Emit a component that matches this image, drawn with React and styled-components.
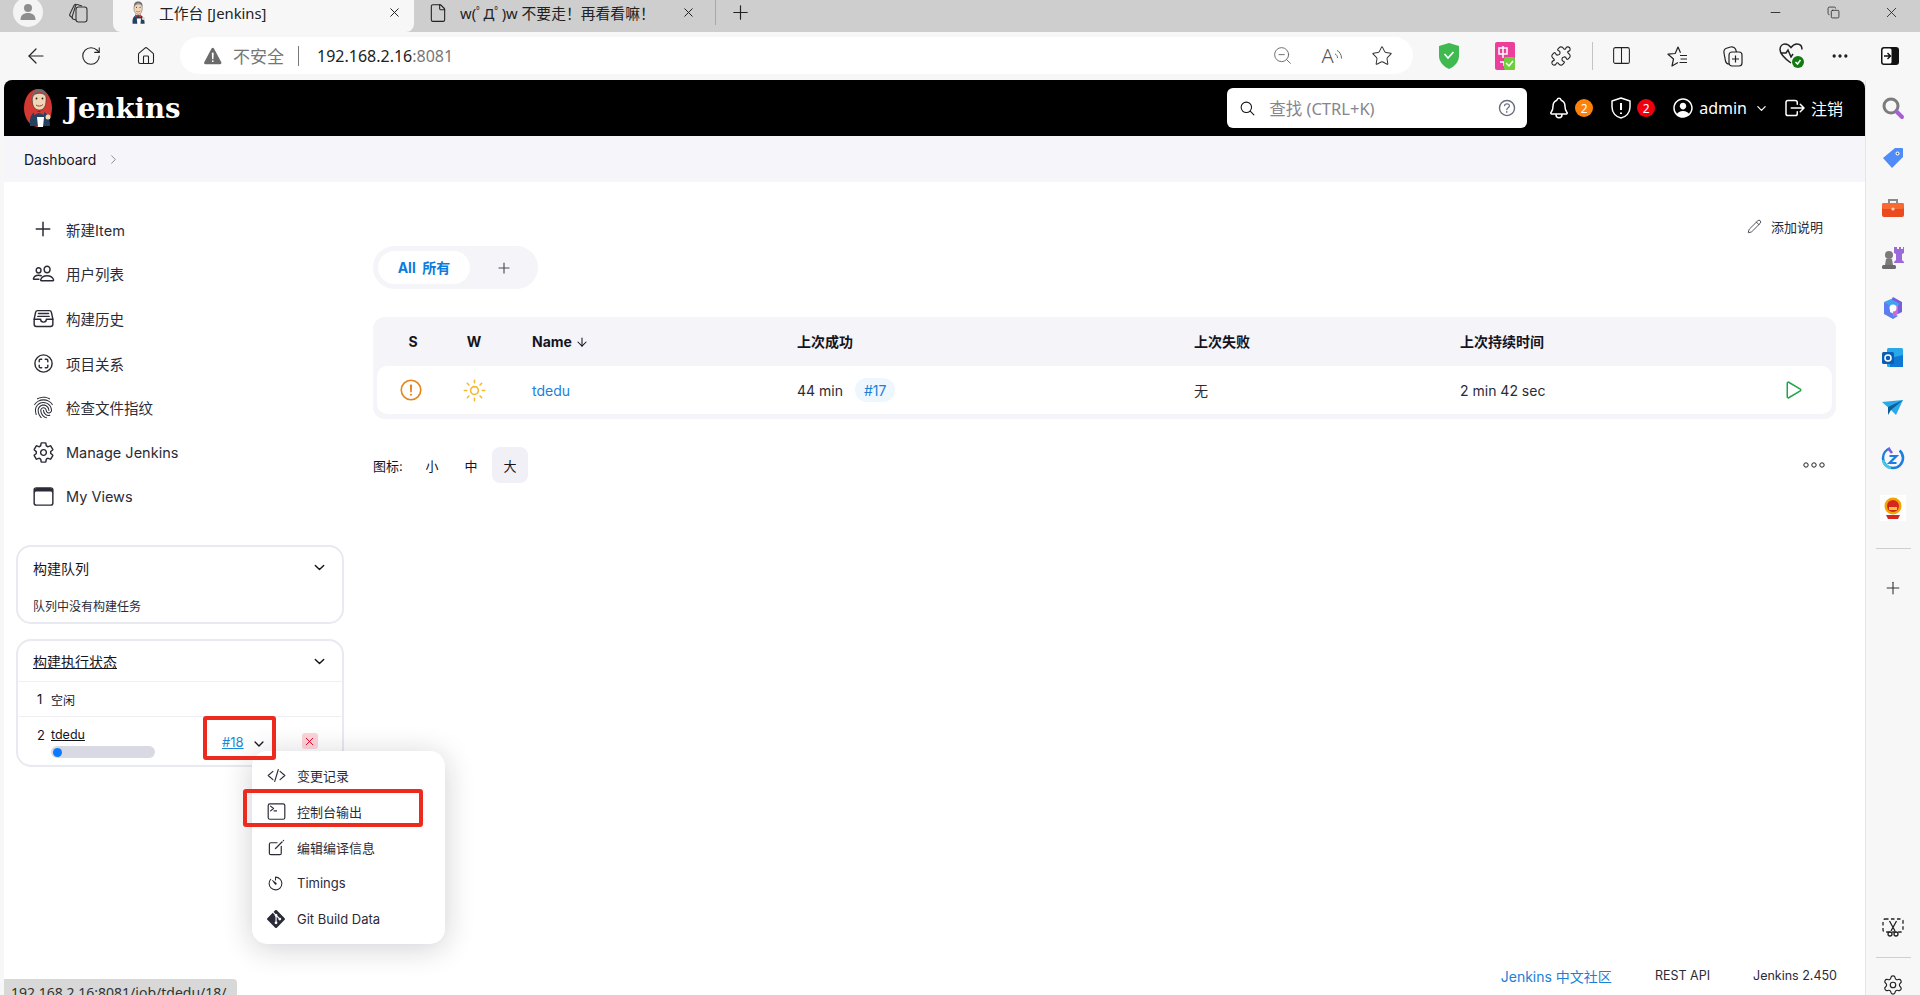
import React from "react";
import styled, { createGlobalStyle } from "styled-components";
import {
  ArrowLeft,
  RotateCw,
  House,
  ZoomOut,
  Star,
  Puzzle,
  Columns2,
  Plus,
  X,
  Minus,
  Copy,
  Ellipsis,
  File,
  ChevronRight,
  ArrowDown,
  Settings,
  Pencil,
} from "lucide-react";
import {
  IoAddOutline,
  IoPeopleOutline,
  IoFileTrayFullOutline,
  IoScanCircleOutline,
  IoFingerPrintOutline,
  IoSettingsOutline,
  IoBrowsersOutline,
  IoCodeSlashOutline,
  IoTerminalOutline,
  IoCreateOutline,
  IoTimerOutline,
  IoNotificationsOutline,
  IoPersonCircleOutline,
  IoLogOutOutline,
  IoSearchOutline,
  IoHelpCircleOutline,
  IoChevronDownOutline,
  IoSunnyOutline,
  IoAlertCircleOutline,
  IoPlayOutline,
  IoCloseOutline,
  IoWarning,
} from "react-icons/io5";
import { SiGit } from "react-icons/si";

const GlobalStyle = createGlobalStyle`
  html, body { margin: 0; padding: 0; height: 100%; overflow: hidden; background: #f7f7f7; }
  * { box-sizing: border-box; }
  body {
    font-family: Inter, "Noto Sans CJK SC", sans-serif;
    color: #14141f;
  }
`;

const Butler = ({ size = 40, bg = true }) => (
  <svg width={(size * 30) / 40} height={size} viewBox="0 0 30 40">
    {bg && <ellipse cx="14" cy="20" rx="14" ry="19" fill="#d33833" />}
    <path d="M6 38c-1-9 2-15 9-15s11 5 11 15z" fill="#24415f" />
    <path d="M8.500 9c-1 7 1 13 7 13 5 0 7-5 6.500-13-1-5-12-5-13.500 0z" fill="#f0d6b7" stroke="#2a2a2a" strokeWidth=".6" />
    <path d="M8.500 10C7.500 4 11 1 15.500 1S23 4 22.500 9c-1.500-3-4-5-7-5s-5.500 2-7 6z" fill="#6d6b6d" />
    <path d="M12 17c2 1.500 5 1.500 7-.5" stroke="#8a4a2a" strokeWidth="1" fill="none" />
    <circle cx="12.500" cy="10.500" r=".9" fill="#222" />
    <circle cx="18.500" cy="10.500" r=".9" fill="#222" />
    <path d="M10 22l5 2 5-2v5l-5-2-5 2z" fill="#d33833" />
    <path d="M13 29h7l-1 10h-5z" fill="#fff" />
    <circle cx="24" cy="29" r="2.500" fill="#f0d6b7" />
  </svg>
);

const WorkspacesIcon = () => (
  <svg width="24" height="24" viewBox="0 0 24 24" fill="none" stroke="#333" strokeWidth="1.100">
    <rect x="10" y="6" width="11" height="15" rx="2.500" />
    <path d="M10 19l-2.500-.8a2 2 0 0 1-1.300-2.500L9.500 5A2 2 0 0 1 12 3.700l4 1.300" />
    <path d="M6.500 16.500l-1.800-1a2 2 0 0 1-.7-2.700L8 4.500A2 2 0 0 1 10.500 3.500" />
  </svg>
);

const ShieldAlertIcon = ({ size = 24 }) => (
  <svg width={size} height={size} viewBox="0 0 24 24" fill="none" stroke="#fff" strokeWidth="1.500">
    <path d="M12 2l9 3v6c0 6-4 10-9 11-5-1-9-5-9-11V5z" strokeLinejoin="round" />
    <path d="M12 7v7M12 16.500v1.500" strokeWidth="2" />
  </svg>
);

const GreenShield = () => (
  <svg width="22" height="28" viewBox="0 0 22 28">
    <path d="M11 1l10 3v10c0 6-5 11-10 13C6 25 1 20 1 14V4z" fill="#3fb950" />
    <path d="M6.500 12l3.500 4 5.500-6" stroke="#fff" strokeWidth="1.600" fill="none" />
  </svg>
);

const TranslatorIcon = () => (
  <svg width="22" height="28" viewBox="0 0 22 28">
    <rect x="1" y="0" width="20" height="28" rx="2" fill="#ec3f9b" />
    <path d="M5 6h8v6H5zM9 4v12M6 20h4v4" stroke="#fff" strokeWidth="1.500" fill="none" />
    <rect x="10" y="15" width="11" height="13" rx="2" fill="#6fce3c" />
    <path d="M12 21l3 3 4-5" stroke="#fff" strokeWidth="1.500" fill="none" />
  </svg>
);

const SoundArcs = () => (
  <svg width="9" height="14" viewBox="0 0 9 14" fill="none" stroke="#666" strokeWidth="1">
    <path d="M1 5c1.500 .5 2.500 2 2.500 4M3 1.500c2.500 1 4.500 4 4.500 8" />
  </svg>
);

const FavoritesIcon = () => (
  <svg width="24" height="24" viewBox="0 0 24 24" fill="none" stroke="#222" strokeWidth="1.200" strokeLinejoin="round">
    <path d="M13 18.500l-6 3.500 1.500-7L3 10.200l7.200-.7L13 3l2.500 5.800" />
    <path d="M15 11.500h7M15.500 15h6.500M14.500 18.500h7.500" />
  </svg>
);

const CollectionsIcon = () => (
  <svg width="24" height="24" viewBox="0 0 24 24" fill="none" stroke="#222" strokeWidth="1.200">
    <rect x="8" y="8" width="13" height="14" rx="3" />
    <path d="M14.500 11.500v7M11 15h7" />
    <path d="M8 20c-2 0-3-1-3.500-3L3 9c-.4-2.500 .5-4 2.500-4.700l4-1.300c2-.5 4 0 5 2l1 3" />
  </svg>
);

const HeartBadge = () => (
  <svg width="28" height="30" viewBox="0 0 28 30" fill="none">
    <path
      d="M13 22C6 17 2 13 2 8.500 2 5 4.500 3 7 3c2.500 0 4.500 1.500 6 3.500C14.500 4.500 16.500 3 19 3c3 0 5 2 5 5.500"
      stroke="#222"
      strokeWidth="1.500"
    />
    <path d="M3 12h5l2-3 3 7 2-3" stroke="#222" strokeWidth="1.500" />
    <circle cx="20" cy="21" r="6" fill="#107c10" />
    <path d="M17.500 21l2 2 3-4" stroke="#fff" strokeWidth="1.500" />
  </svg>
);

const SidebarToggle = () => (
  <svg width="20" height="20" viewBox="0 0 20 20">
    <rect x="1" y="1" width="18" height="18" rx="3" fill="#111" />
    <rect x="2.500" y="2.500" width="9" height="15" rx="1.500" fill="#fff" />
    <path d="M4 10h6M7.500 7l3 3-3 3" stroke="#111" strokeWidth="1.400" fill="none" />
  </svg>
);

const DotsOutline = () => (
  <svg width="24" height="8" viewBox="0 0 24 8" fill="none" stroke="#222" strokeWidth="1">
    <circle cx="4" cy="4" r="2.200" />
    <circle cx="12" cy="4" r="2.200" />
    <circle cx="20" cy="4" r="2.200" />
  </svg>
);

const RailSearch = () => (
  <svg width="24" height="24" viewBox="0 0 24 24" fill="none">
    <circle cx="10" cy="10" r="7" stroke="#7c7c7c" strokeWidth="3" />
    <path d="M15.500 15.500L21 21" stroke="#a45fd6" strokeWidth="4" strokeLinecap="round" />
  </svg>
);

const RailTag = () => (
  <svg width="22" height="22" viewBox="0 0 22 22">
    <path d="M13 1h7a1 1 0 0 1 1 1v8L10 21 1 11z" fill="#4f8bf9" />
    <circle cx="15.500" cy="6.500" r="2" fill="#fff" />
    <circle cx="15.500" cy="6.500" r="1" fill="#2a5fd0" />
  </svg>
);

const RailToolbox = () => (
  <svg width="24" height="20" viewBox="0 0 24 20">
    <path d="M8 5V2h8v3" stroke="#8a8a8a" strokeWidth="2" fill="none" />
    <rect x="1" y="5" width="22" height="14" rx="2" fill="#ea4a1f" />
    <rect x="1" y="5" width="22" height="6" rx="2" fill="#f96a32" />
    <circle cx="12" cy="11" r="1.600" fill="#ffd3c0" />
  </svg>
);

const RailChess = () => (
  <svg width="24" height="24" viewBox="0 0 24 24">
    <circle cx="8" cy="9" r="4" fill="#7b7b7b" />
    <path d="M5 13h6l1 6H4z" fill="#7b7b7b" />
    <rect x="1" y="19" width="14" height="4" rx="1.500" fill="#6a6a6a" />
    <path d="M14 1h2v2h2V1h2v2h2V1h1v6l-2 1v6l2 2v1H13v-1l2-2V8l-2-1V1z" fill="#9b6ad8" />
  </svg>
);

const RailCopilot = () => (
  <svg width="22" height="24" viewBox="0 0 22 24">
    <path d="M11 1l9 5v10l-4 2V8L9 4z" fill="#7a5ce0" />
    <path d="M2 6l7-3 9 5-7 4-5-2z" fill="#3fa3ee" />
    <path d="M2 6v12l9 5 5-3-8-4V10z" fill="#5c7df0" />
    <path d="M11 12l5-3v9l-5 3z" fill="#c66bd8" />
    <circle cx="11" cy="12" r="3.500" fill="#fff" />
  </svg>
);

const RailOutlook = () => (
  <svg width="22" height="20" viewBox="0 0 22 20">
    <rect x="5" y="0" width="16" height="19" rx="1.500" fill="#28a8ea" />
    <path d="M8 10l13-3v12H8z" fill="#0f78d4" />
    <rect x="0" y="4" width="12" height="12" rx="1.500" fill="#0a5fb4" />
    <circle cx="6" cy="10" r="3" fill="none" stroke="#fff" strokeWidth="1.500" />
  </svg>
);

const RailSend = () => (
  <svg width="22" height="16" viewBox="0 0 22 16">
    <path d="M0 2l21-2-7 15-5-5z" fill="#29a9eb" />
    <path d="M6 7l15-7-12 10-3 5z" fill="#0b5f99" />
  </svg>
);

const RailZ = () => (
  <svg width="24" height="24" viewBox="0 0 24 24" fill="none">
    <circle cx="12" cy="12" r="10" stroke="#1a7fe0" strokeWidth="2.500" strokeDasharray="44 10" />
    <path d="M2 14a10 10 0 0 0 8 8" stroke="#45c8e8" strokeWidth="2.500" />
    <path d="M7 2l4 5" stroke="#7a5ce0" strokeWidth="2.500" />
    <path d="M8.500 10h7l-7 7h7" stroke="#1a7fe0" strokeWidth="2.200" />
  </svg>
);

const RailEmblem = () => (
  <svg width="26" height="26" viewBox="0 0 26 26">
    <rect width="26" height="26" fill="#fff" />
    <circle cx="13" cy="11" r="8.500" fill="#f0a500" />
    <circle cx="13" cy="11" r="6" fill="#d7261e" />
    <path d="M6 20h14l-2 4H8z" fill="#d7261e" />
    <rect x="9" y="12" width="8" height="3" fill="#f5c542" />
  </svg>
);

const RailCut = () => (
  <svg width="22" height="20" viewBox="0 0 22 20" fill="none" stroke="#222" strokeWidth="1.300">
    <rect x="1" y="1" width="20" height="13" rx="2" strokeDasharray="3.500 2.500" />
    <path d="M7.500 3l5.500 10M14.500 3L9 13" />
    <circle cx="8" cy="16" r="2" />
    <circle cx="14" cy="16" r="2" />
  </svg>
);

const App = () => {
  const navItems = [
    { Icon: IoAddOutline, label: "新建Item" },
    { Icon: IoPeopleOutline, label: "用户列表" },
    { Icon: IoFileTrayFullOutline, label: "构建历史" },
    { Icon: IoScanCircleOutline, label: "项目关系" },
    { Icon: IoFingerPrintOutline, label: "检查文件指纹" },
    { Icon: IoSettingsOutline, label: "Manage Jenkins" },
    { Icon: IoBrowsersOutline, label: "My Views" },
  ];
  const menuItems = [
    { Icon: IoCodeSlashOutline, label: "变更记录", size: 19 },
    { Icon: IoTerminalOutline, label: "控制台输出", size: 19 },
    { Icon: IoCreateOutline, label: "编辑编译信息", size: 19 },
    { Icon: IoTimerOutline, label: "Timings", size: 17 },
    { Icon: SiGit, label: "Git Build Data", size: 18 },
  ];
  const railIcons = [RailSearch, RailTag, RailToolbox, RailChess, RailCopilot, RailOutlook, RailSend, RailZ, RailEmblem];

  return (
    <Screen>
      <GlobalStyle />
      <TabStrip>
        <ProfileDot>
          <svg width="20" height="20" viewBox="0 0 20 20" fill="#8e8e8e">
            <circle cx="10" cy="6" r="4" />
            <path d="M2.500 18c0-5 3-7 7.500-7s7.500 2 7.500 7z" />
          </svg>
        </ProfileDot>
        <WorkspaceSlot>
          <WorkspacesIcon />
        </WorkspaceSlot>
        <ActiveTab>
          <Butler size={24} bg={false} />
          <TabTitle>工作台 [Jenkins]</TabTitle>
          <X size={15} strokeWidth={1.6} color="#222" />
        </ActiveTab>
        <IdleTab>
          <File size={20} strokeWidth={1.3} color="#222" />
          <TabTitle>w(ﾟДﾟ)w 不要走！再看看嘛！</TabTitle>
          <X size={15} strokeWidth={1.6} color="#222" />
        </IdleTab>
        <NewTab>
          <Plus size={23} strokeWidth={1.2} color="#222" />
        </NewTab>
        <WindowControls>
          <WindowButton>
            <Minus size={15} strokeWidth={1.4} color="#222" />
          </WindowButton>
          <WindowButton>
            <Copy size={13} strokeWidth={1.4} color="#222" />
          </WindowButton>
          <WindowButton>
            <X size={17} strokeWidth={1.2} color="#222" />
          </WindowButton>
        </WindowControls>
      </TabStrip>

      <Toolbar>
        <ToolSlot $w={55}>
          <ArrowLeft size={24} strokeWidth={1.2} color="#222" />
        </ToolSlot>
        <ToolSlot $w={55}>
          <RotateCw size={22} strokeWidth={1.2} color="#222" />
        </ToolSlot>
        <ToolSlot $w={55}>
          <House size={20} strokeWidth={1.3} color="#222" />
        </ToolSlot>
        <AddressBar>
          <IoWarning size={22} color="#6b6b6b" />
          <InsecureLabel>不安全</InsecureLabel>
          <AddressDivider />
          <Url>
            192.168.2.16<UrlPort>:8081</UrlPort>
          </Url>
          <AddressActions>
            <ToolSlot $w={50}>
              <ZoomOut size={21} strokeWidth={1.1} color="#6a6a6a" />
            </ToolSlot>
            <ToolSlot $w={50}>
              <ReadAloud>A</ReadAloud>
              <SoundArcs />
            </ToolSlot>
            <ToolSlot $w={50}>
              <Star size={22} strokeWidth={1.1} color="#333" />
            </ToolSlot>
          </AddressActions>
        </AddressBar>
        <ToolGroup>
          <ToolSlot $w={56}>
            <GreenShield />
          </ToolSlot>
          <ToolSlot $w={56}>
            <TranslatorIcon />
          </ToolSlot>
          <ToolSlot $w={56}>
            <Puzzle size={22} strokeWidth={1.2} color="#222" />
          </ToolSlot>
          <ToolDivider />
          <ToolSlot $w={56}>
            <Columns2 size={21} strokeWidth={1.2} color="#222" />
          </ToolSlot>
          <ToolSlot $w={56}>
            <FavoritesIcon />
          </ToolSlot>
          <ToolSlot $w={56}>
            <CollectionsIcon />
          </ToolSlot>
          <ToolSlot $w={62}>
            <HeartBadge />
          </ToolSlot>
          <ToolSlot $w={34}>
            <Ellipsis size={20} color="#222" />
          </ToolSlot>
          <ToolSlot $w={66}>
            <SidebarToggle />
          </ToolSlot>
        </ToolGroup>
      </Toolbar>

      <Body>
        <Gutter />
        <Page>
          <Header>
            <Butler size={40} />
            <Brand>Jenkins</Brand>
            <SearchBox>
              <IoSearchOutline size={17} color="#14141f" />
              <SearchHint>查找 (CTRL+K)</SearchHint>
              <IoHelpCircleOutline size={22} color="#6b6b80" />
            </SearchBox>
            <HeaderAction $ml={20}>
              <IoNotificationsOutline size={24} />
              <CountBadge $bg="#fe820a">2</CountBadge>
            </HeaderAction>
            <HeaderAction $ml={16}>
              <ShieldAlertIcon />
              <CountBadge $bg="#f0000f">2</CountBadge>
            </HeaderAction>
            <HeaderAction $ml={16}>
              <IoPersonCircleOutline size={24} />
              <HeaderLabel>admin</HeaderLabel>
              <HeaderChevron>
                <IoChevronDownOutline size={13} />
              </HeaderChevron>
            </HeaderAction>
            <HeaderAction $ml={15}>
              <IoLogOutOutline size={24} />
              <HeaderLabel>注销</HeaderLabel>
            </HeaderAction>
          </Header>

          <Breadcrumb>
            Dashboard
            <ChevronRight size={15} strokeWidth={1.3} color="#777" />
          </Breadcrumb>

          <Main>
            <SidePanel>
              <Nav>
                {navItems.map(({ Icon, label }) => (
                  <NavItem key={label}>
                    <NavIcon>
                      <Icon size={label === "新建Item" ? 24 : 23} />
                    </NavIcon>
                    {label}
                  </NavItem>
                ))}
              </Nav>
              <Card>
                <CardHead>
                  构建队列
                  <IoChevronDownOutline size={15} />
                </CardHead>
                <QueueNote>队列中没有构建任务</QueueNote>
              </Card>
              <Card>
                <CardHead $ruled>
                  <u>构建执行状态</u>
                  <IoChevronDownOutline size={15} />
                </CardHead>
                <ExecutorRow $h={35}>
                  <ExecutorNo>1</ExecutorNo>
                  <span>空闲</span>
                </ExecutorRow>
                <ExecutorRow $h={48} $last>
                  <ExecutorNo>2</ExecutorNo>
                  <ExecutorJob>
                    <u>tdedu</u>
                    <Progress>
                      <ProgressDot />
                    </Progress>
                  </ExecutorJob>
                  <BuildLink>#18</BuildLink>
                  <BuildChevron>
                    <IoChevronDownOutline size={14} />
                  </BuildChevron>
                  <StopButton>
                    <IoCloseOutline size={15} color="#e6001f" />
                  </StopButton>
                </ExecutorRow>
              </Card>
            </SidePanel>

            <Content>
              <DescriptionRow>
                <Pencil size={15} strokeWidth={1.3} />
                添加说明
              </DescriptionRow>
              <ViewTabs>
                <ViewTab>All&nbsp; 所有</ViewTab>
                <AddView>
                  <IoAddOutline size={18} color="#4a4a5a" />
                </AddView>
              </ViewTabs>
              <JobTable>
                <TableHead>
                  <HeadCell $center>S</HeadCell>
                  <HeadCell $center>W</HeadCell>
                  <HeadCell $pl={33}>
                    Name <ArrowDown size={14} strokeWidth={1.8} style={{ verticalAlign: -2 }} />
                  </HeadCell>
                  <HeadCell>上次成功</HeadCell>
                  <HeadCell>上次失败</HeadCell>
                  <HeadCell>上次持续时间</HeadCell>
                  <HeadCell />
                </TableHead>
                <TableRow>
                  <BodyCell $center $pr={5}>
                    <IoAlertCircleOutline size={26} color="#e8841c" />
                  </BodyCell>
                  <BodyCell $center>
                    <IoSunnyOutline size={25} color="#f2b92c" />
                  </BodyCell>
                  <BodyCell $pl={33}>
                    <JobLink>tdedu</JobLink>
                  </BodyCell>
                  <BodyCell>
                    44 min
                    <BuildPill>#17</BuildPill>
                  </BodyCell>
                  <BodyCell>无</BodyCell>
                  <BodyCell>2 min 42 sec</BodyCell>
                  <BodyCell $center>
                    <IoPlayOutline size={24} color="#1ea64b" />
                  </BodyCell>
                </TableRow>
              </JobTable>
              <LegendRow>
                <LegendLabel>图标:</LegendLabel>
                <SizeOption>小</SizeOption>
                <SizeOption>中</SizeOption>
                <SizeOption $active>大</SizeOption>
                <LegendMore>
                  <DotsOutline />
                </LegendMore>
              </LegendRow>
            </Content>
          </Main>

          <Footer>
            <FooterLink>Jenkins 中文社区</FooterLink>
            <span>REST API</span>
            <span>Jenkins 2.450</span>
          </Footer>
        </Page>

        <Rail>
          {railIcons.map((Icon, i) => (
            <RailSlot key={i} $h={50}>
              <Icon />
            </RailSlot>
          ))}
          <RailDivider $mt={15} />
          <RailSlot $h={48} $mt={15}>
            <Plus size={20} strokeWidth={1.3} color="#333" />
          </RailSlot>
          <RailSpacer />
          <RailSlot $h={48}>
            <RailCut />
          </RailSlot>
          <RailDivider $mt={5} />
          <RailSlot $h={33} $pt={13} $mt={4}>
            <Settings size={22} strokeWidth={1.3} color="#222" />
          </RailSlot>
        </Rail>
      </Body>

      <Menu>
        {menuItems.map(({ Icon, label, size }) => (
          <MenuItem key={label}>
            <MenuIcon>
              <Icon size={size} />
            </MenuIcon>
            {label}
          </MenuItem>
        ))}
      </Menu>
      <Highlight $x={203} $y={716} $w={73} $h={44} />
      <Highlight $x={243} $y={789} $w={180} $h={38} />
      <StatusBubble>192.168.2.16:8081/job/tdedu/18/</StatusBubble>
    </Screen>
  );
};

export default App;

const Screen = styled.div`
  position: relative;
  width: 1920px;
  height: 995px;
  display: flex;
  flex-direction: column;
  overflow: hidden;
  background: #f7f7f7;
`;
const TabStrip = styled.div`
  height: 32px;
  flex: none;
  display: flex;
  align-items: flex-start;
  background: #cecece;
  padding-left: 13px;
  font-family: "Noto Sans", "Noto Sans CJK SC", sans-serif;
`;
const ProfileDot = styled.div`
  width: 30px;
  height: 30px;
  border-radius: 50%;
  background: #f4f4f4;
  display: flex;
  align-items: center;
  justify-content: center;
  margin-top: -3px;
  flex: none;
`;
const WorkspaceSlot = styled.div`
  width: 70px;
  height: 25px;
  flex: none;
  display: flex;
  align-items: center;
  justify-content: center;
`;
const ActiveTab = styled.div`
  width: 301px;
  height: 32px;
  flex: none;
  display: flex;
  align-items: center;
  padding: 0 12px 7px 16px;
  background: #f7f7f7;
  border-radius: 0 0 8px 8px;
`;
const IdleTab = styled.div`
  width: 302px;
  height: 25px;
  flex: none;
  display: flex;
  align-items: center;
  padding: 0 19px 0 14px;
  border-right: 1px solid #a8a8a8;
`;
const TabTitle = styled.span`
  flex: 1;
  margin-left: 12px;
  font-size: 14.800px;
  color: #222;
  white-space: nowrap;
`;
const NewTab = styled.div`
  width: 48px;
  height: 25px;
  flex: none;
  display: flex;
  align-items: center;
  justify-content: center;
`;
const WindowControls = styled.div`
  margin-left: auto;
  width: 173px;
  height: 25px;
  display: flex;
`;
const WindowButton = styled.div`
  flex: 1;
  display: flex;
  align-items: center;
  justify-content: center;
`;
const Toolbar = styled.div`
  height: 48px;
  flex: none;
  display: flex;
  align-items: center;
  padding: 0 0 1px 8px;
  background: #f7f7f7;
  overflow: hidden;
`;
const ToolSlot = styled.div`
  width: ${(p) => p.$w}px;
  display: flex;
  align-items: center;
  justify-content: center;
  flex: none;
`;
const AddressBar = styled.div`
  width: 1233px;
  height: 37px;
  flex: none;
  margin-left: 7px;
  padding-left: 22px;
  display: flex;
  align-items: center;
  background: #fff;
  border-radius: 19px;
  font-family: "Noto Sans", "Noto Sans CJK SC", sans-serif;
`;
const InsecureLabel = styled.span`
  margin-left: 9px;
  font-size: 17px;
  color: #757575;
`;
const AddressDivider = styled.span`
  width: 1px;
  height: 20px;
  margin: 0 18px 0 14px;
  background: #777;
`;
const Url = styled.span`
  font-size: 16px;
  color: #222;
`;
const UrlPort = styled.span`
  color: #777;
`;
const AddressActions = styled.div`
  margin-left: auto;
  padding-right: 6px;
  display: flex;
`;
const ReadAloud = styled.span`
  font-size: 20px;
  font-weight: 300;
  color: #555;
`;
const ToolGroup = styled.div`
  display: flex;
  align-items: center;
  flex: none;
  margin-left: 8px;
`;
const ToolDivider = styled.div`
  width: 1px;
  height: 28px;
  flex: none;
  margin-left: 3px;
  background: #c4c4c4;
`;
const Body = styled.div`
  flex: 1;
  min-height: 0;
  display: flex;
`;
const Gutter = styled.div`
  width: 4px;
  flex: none;
`;
const Page = styled.div`
  width: 1861px;
  flex: none;
  display: flex;
  flex-direction: column;
  background: #fff;
  border-radius: 8px 8px 0 0;
  overflow: hidden;
`;
const Header = styled.header`
  height: 56px;
  flex: none;
  display: flex;
  align-items: center;
  padding: 0 22px 0 20px;
  background: #000;
  color: #fff;
`;
const Brand = styled.div`
  margin-left: 11px;
  font-family: "DejaVu Serif", serif;
  font-weight: 700;
  font-size: 27.500px;
`;
const SearchBox = styled.div`
  width: 300px;
  height: 40px;
  flex: none;
  margin-left: auto;
  padding: 0 9px 0 12px;
  display: flex;
  align-items: center;
  background: #fff;
  border-radius: 6px;
  font-family: "Noto Sans", "Noto Sans CJK SC", sans-serif;
`;
const SearchHint = styled.span`
  flex: 1;
  margin-left: 13px;
  font-size: 16.500px;
  color: #85858f;
`;
const HeaderAction = styled.div`
  display: flex;
  align-items: center;
  flex: none;
  margin-left: ${(p) => p.$ml}px;
  font-family: "Noto Sans", "Noto Sans CJK SC", sans-serif;
`;
const CountBadge = styled.span`
  width: 18px;
  height: 18px;
  margin-left: 4px;
  display: flex;
  align-items: center;
  justify-content: center;
  border-radius: 50%;
  background: ${(p) => p.$bg};
  font-size: 12px;
  color: #fff;
`;
const HeaderLabel = styled.span`
  margin-left: 4px;
  font-size: 16px;
`;
const HeaderChevron = styled.span`
  margin-left: 8px;
  display: flex;
`;
const Breadcrumb = styled.div`
  height: 46px;
  flex: none;
  display: flex;
  align-items: center;
  gap: 10px;
  padding-left: 20px;
  background: #f5f5fa;
  font-size: 14px;
`;
const Main = styled.div`
  flex: 1;
  min-height: 0;
  display: flex;
  padding: 0 29px 0 12px;
`;
const SidePanel = styled.aside`
  width: 328px;
  flex: none;
  padding-top: 25px;
`;
const Nav = styled.nav`
  margin-bottom: 26px;
`;
const NavItem = styled.div`
  height: 44.6px;
  display: flex;
  align-items: center;
  padding-left: 15px;
  font-size: 14.500px;
  color: #2b2b38;
`;
const NavIcon = styled.span`
  width: 35px;
  display: flex;
  justify-content: center;
  padding-right: 11px;
`;
const Card = styled.section`
  margin-bottom: 15px;
  border: 2px solid #e9e9f0;
  border-radius: 15px;
  font-size: 12px;
`;
const CardHead = styled.div`
  height: 41px;
  display: flex;
  align-items: center;
  justify-content: space-between;
  padding: 0 15px;
  font-size: 14px;
  ${(p) => p.$ruled && "border-bottom: 1px solid #efeff3;"}
`;
const QueueNote = styled.div`
  padding: 9px 15px 0;
  height: 34px;
  color: #2b2b38;
`;
const ExecutorRow = styled.div`
  height: ${(p) => p.$h}px;
  display: flex;
  align-items: ${(p) => (p.$last ? "flex-start" : "center")};
  padding: ${(p) => (p.$last ? "10px 0 0 19px" : "0 0 0 19px")};
  ${(p) => !p.$last && "border-bottom: 1px solid #efeff3;"}
`;
const ExecutorNo = styled.span`
  width: 14px;
  font-size: 13px;
`;
const ExecutorJob = styled.div`
  width: 171px;
  font-size: 12.500px;
  line-height: 16px;
`;
const Progress = styled.div`
  width: 104px;
  height: 12px;
  margin-top: 3px;
  padding: 1.500px 2px;
  border-radius: 6px;
  background: #d9d9e3;
`;
const ProgressDot = styled.div`
  width: 9px;
  height: 9px;
  border-radius: 50%;
  background: #0b7cff;
`;
const BuildLink = styled.u`
  margin-top: 7px;
  font-size: 13px;
  line-height: 16px;
  color: #1a8ad8;
`;
const BuildChevron = styled.span`
  margin: 10px 0 0 8px;
  line-height: 0;
`;
const StopButton = styled.span`
  width: 16px;
  height: 16px;
  margin: 6px 0 0 36px;
  display: flex;
  align-items: center;
  justify-content: center;
  border-radius: 3px;
  background: #fcd5da;
`;
const Content = styled.main`
  flex: 1;
  min-width: 0;
  margin-left: 29px;
  padding-top: 34px;
`;
const DescriptionRow = styled.div`
  height: 22px;
  margin-bottom: 8px;
  padding: 0 13px 2px 0;
  display: flex;
  align-items: center;
  justify-content: flex-end;
  gap: 9px;
  font-size: 13px;
  color: #2b2b38;
`;
const ViewTabs = styled.div`
  width: 165px;
  height: 43px;
  padding: 5px;
  display: flex;
  align-items: center;
  border-radius: 22px;
  background: #f4f4f9;
`;
const ViewTab = styled.div`
  width: 92px;
  height: 33px;
  flex: none;
  padding-bottom: 1px;
  display: flex;
  align-items: center;
  justify-content: center;
  border-radius: 17px;
  background: #fff;
  font-size: 14px;
  font-weight: 700;
  color: #0b7cdf;
`;
const AddView = styled.div`
  width: 68px;
  flex: none;
  display: flex;
  justify-content: center;
`;
const JobTable = styled.div`
  height: 102px;
  margin-top: 28px;
  padding: 0 4px 5px;
  border-radius: 12px;
  background: #f4f4f9;
`;
const tableColumns = "72px 50px 298px 397px 266px 1fr 76px";
const TableHead = styled.div`
  height: 49px;
  padding-bottom: 1px;
  display: grid;
  grid-template-columns: ${tableColumns};
  align-items: center;
  font-size: 14px;
  font-weight: 700;
`;
const HeadCell = styled.div`
  text-align: ${(p) => (p.$center ? "center" : "left")};
  padding-left: ${(p) => p.$pl || 0}px;
`;
const TableRow = styled.div`
  height: 48px;
  display: grid;
  grid-template-columns: ${tableColumns};
  align-items: center;
  border-radius: 10px;
  background: #fff;
  font-size: 14px;
  color: #2b2b38;
`;
const BodyCell = styled.div`
  display: flex;
  align-items: center;
  justify-content: ${(p) => (p.$center ? "center" : "flex-start")};
  padding-left: ${(p) => p.$pl || 0}px;
  padding-right: ${(p) => p.$pr || 0}px;
`;
const JobLink = styled.span`
  color: #1a80d8;
`;
const BuildPill = styled.span`
  height: 24px;
  margin-left: 12px;
  padding: 0 9px;
  display: flex;
  align-items: center;
  border-radius: 12px;
  background: #eef7fe;
  color: #1a80d8;
`;
const LegendRow = styled.div`
  height: 36px;
  margin-top: 28px;
  display: flex;
  align-items: center;
  gap: 3px;
  font-size: 13px;
`;
const LegendLabel = styled.span`
  width: 38px;
`;
const SizeOption = styled.span`
  width: 36px;
  height: 36px;
  display: flex;
  align-items: center;
  justify-content: center;
  border-radius: 8px;
  background: ${(p) => (p.$active ? "#f0f0f6" : "transparent")};
`;
const LegendMore = styled.span`
  margin-left: auto;
  padding-right: 10px;
  display: flex;
`;
const Footer = styled.footer`
  height: 39px;
  flex: none;
  display: flex;
  align-items: center;
  justify-content: flex-end;
  gap: 43px;
  padding-right: 28px;
  font-size: 12.500px;
  color: #2b2b38;
`;
const FooterLink = styled.span`
  color: #1a80d8;
  font-size: 14px;
`;
const Rail = styled.div`
  flex: 1;
  min-width: 0;
  padding-top: 2.500px;
  display: flex;
  flex-direction: column;
  align-items: center;
  border-left: 1px solid #e6e6e6;
  overflow: hidden;
`;
const RailSlot = styled.div`
  width: 100%;
  height: ${(p) => p.$h}px;
  flex: none;
  margin-top: ${(p) => p.$mt || 0}px;
  padding-top: ${(p) => p.$pt || 0}px;
  display: flex;
  align-items: center;
  justify-content: center;
`;
const RailDivider = styled.div`
  width: 35px;
  height: 1px;
  flex: none;
  margin-top: ${(p) => p.$mt}px;
  background: #cfcfcf;
`;
const RailSpacer = styled.div`
  flex: 1;
`;
const Menu = styled.div`
  position: absolute;
  left: 252px;
  top: 751px;
  width: 193px;
  height: 193px;
  padding: 6px 0;
  border-radius: 15px;
  background: #fff;
  box-shadow: 0 4px 30px rgba(20, 20, 40, 0.2);
`;
const MenuItem = styled.div`
  height: 36px;
  display: flex;
  align-items: center;
  font-size: 13px;
  color: #2b2b38;
`;
const MenuIcon = styled.span`
  width: 45px;
  padding-left: 15px;
  display: flex;
  justify-content: flex-start;
`;
const Highlight = styled.div`
  position: absolute;
  left: ${(p) => p.$x}px;
  top: ${(p) => p.$y}px;
  width: ${(p) => p.$w}px;
  height: ${(p) => p.$h}px;
  border: 4px solid #ec2a1e;
  border-radius: 3px;
`;
const StatusBubble = styled.div`
  position: absolute;
  left: 4px;
  top: 979px;
  width: 233px;
  height: 16px;
  padding: 5px 0 0 7px;
  overflow: hidden;
  background: #d8d8d8;
  border-radius: 0 4px 0 0;
  font-family: "Noto Sans", sans-serif;
  font-size: 14px;
  line-height: 18px;
  color: #333;
  white-space: nowrap;
`;
